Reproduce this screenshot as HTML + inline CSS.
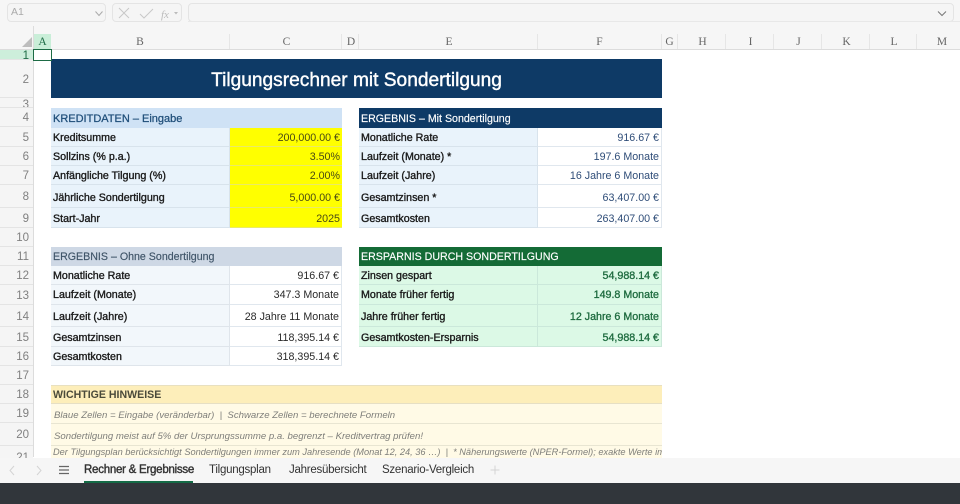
<!DOCTYPE html>
<html lang="de"><head><meta charset="utf-8"><title>Tilgungsrechner</title>
<style>
html,body{margin:0;padding:0;width:960px;height:504px;overflow:hidden;background:#fff;font-family:"Liberation Sans",Arial,sans-serif}
#w{position:relative;width:960px;height:504px;overflow:hidden;filter:blur(.35px)}
#w div{position:absolute;box-sizing:border-box;white-space:nowrap}
.box{background:#f5f5f5;border:1px solid #e4e4e4;border-radius:4px}
.ch{top:34px;height:15px;text-align:center;font:11.5px/16px "Liberation Serif",serif;color:#666;border-right:1px solid #e6e6e6}
.rh{left:0;width:33px;text-align:right;padding:1px 4px 0 0;font-size:11.5px;color:#808080;background:#f5f5f5;border-bottom:1px solid #e4e4e4}
.c{font-size:10.7px;padding:2px 0 0 2px;color:#1a1a1a;-webkit-text-stroke:.35px #1a1a1a;display:flex;align-items:center}
.l{background:#e9f3fb;border-bottom:1px solid #d8e3ec;border-right:1px solid #d8e3ec}
.v{font-size:10.7px;text-align:right;padding:2px 2px 0 0;display:flex;align-items:center;justify-content:flex-end;border-bottom:1px solid #e0e7ee;border-right:1px solid #e0e7ee;background:#fff;color:#2a2a2a}
.y{background:#ffff00;color:#4a4a14;border-bottom:1px solid #eaea66;border-right:0}
.b{color:#2f4d78}
.g{background:#dcf9e6;color:#1e6b3f;-webkit-text-stroke:.3px #1e6b3f;border-color:#cbe8da}
.gl{background:#dcf9e6;border-color:#cbe8da}
.p{background:#f2f7fb;border-bottom:1px solid #dfe5eb;border-right:1px solid #dfe5eb}
.h{font-size:10.65px;padding:2px 0 0 2px;display:flex;align-items:center;-webkit-text-stroke:.15px}
.n{left:51px;width:611px;font-size:9.6px;font-style:italic;color:#7e7e7a;padding:4px 0 0 3px;background:#fffae6;border-bottom:1px solid #e8e5d2;display:flex;align-items:center;overflow:hidden}
.t{top:458px;height:25px;line-height:25px;font-size:11.5px;letter-spacing:-.25px;color:#333}
.d1{padding-top:3.5px}
</style></head><body><div id="w">

<!-- top bar -->
<div style="left:0;top:0;width:960px;height:49px;background:#f6f6f6"></div>
<div class="box" style="left:7px;top:3px;width:99px;height:19px;font-size:10.5px;line-height:17px;color:#aaa;padding-left:3px">A1</div>
<svg style="position:absolute;left:94px;top:10px" width="10" height="7"><path d="M1.5 1.5L5 5.5L8.5 1.5" fill="none" stroke="#aaa" stroke-width="1"/></svg>
<div class="box" style="left:112px;top:3px;width:70px;height:19px"></div>
<svg style="position:absolute;left:116px;top:5px" width="64" height="16"><path d="M3 3L13 13M13 3L3 13" stroke="#c8c8c8" stroke-width="1" fill="none"/><path d="M24 9L28 13L37 4" stroke="#c8c8c8" stroke-width="1" fill="none"/><text x="45" y="13" font-family="Liberation Serif" font-style="italic" font-size="11" fill="#bbb">fx</text><path d="M58 7L60 9.5L62 7z" fill="#bbb"/></svg>
<div class="box" style="left:188px;top:3px;width:766px;height:19px"></div>
<svg style="position:absolute;left:937px;top:10px" width="10" height="7"><path d="M1 1.5L5 5.5L9 1.5" fill="none" stroke="#777" stroke-width="1"/></svg>
<div style="left:188px;top:21px;width:772px;height:1px;background:#e8e8e8"></div>

<!-- column headers -->
<div style="left:33px;top:26px;width:1px;height:431px;background:#dcdcdc"></div>
<svg style="position:absolute;left:22px;top:37px" width="10" height="10"><path d="M10 0V10H0z" fill="#bdbdbd"/></svg>
<div class="ch" style="left:34px;width:17px;background:#c9eed8;color:#1d6b45;border-right:0">A</div>
<div class="ch" style="left:51px;width:179px">B</div>
<div class="ch" style="left:230px;width:112px;padding-left:2px">C</div>
<div class="ch" style="left:342px;width:17px;padding-left:2px">D</div>
<div class="ch" style="left:359px;width:179px;padding-left:2px">E</div>
<div class="ch" style="left:538px;width:124px">F</div>
<div class="ch" style="left:662px;width:16px">G</div>
<div class="ch" style="left:678px;width:48px;padding-left:2px">H</div>
<div class="ch" style="left:726px;width:48px;padding-left:2px">I</div>
<div class="ch" style="left:774px;width:48px;padding-left:2px">J</div>
<div class="ch" style="left:822px;width:48px;padding-left:2px">K</div>
<div class="ch" style="left:870px;width:47px;padding-left:2px">L</div>
<div class="ch" style="left:917px;width:43px;border-right:0;padding-left:7px">M</div>
<div style="left:0;top:49px;width:960px;height:1px;background:#dcdcdc"></div>

<!-- row headers -->
<div class="rh" style="top:50px;height:10px;line-height:10px;background:#cdeedb;color:#1d6b45">1</div>
<div class="rh" style="top:60px;height:38px;line-height:38px">2</div>
<div class="rh" style="top:98px;height:10px;line-height:13px;overflow:hidden">3</div>
<div class="rh" style="top:108px;height:19px;line-height:19px">4</div>
<div class="rh" style="top:127px;height:20px;line-height:20px">5</div>
<div class="rh" style="top:147px;height:19px;line-height:19px">6</div>
<div class="rh" style="top:166px;height:19px;line-height:19px">7</div>
<div class="rh" style="top:185px;height:23px;line-height:23px">8</div>
<div class="rh" style="top:208px;height:20px;line-height:20px">9</div>
<div class="rh" style="top:228px;height:19px;line-height:19px">10</div>
<div class="rh" style="top:247px;height:19px;line-height:19px">11</div>
<div class="rh" style="top:266px;height:19px;line-height:19px">12</div>
<div class="rh" style="top:285px;height:20px;line-height:20px">13</div>
<div class="rh" style="top:305px;height:22px;line-height:22px">14</div>
<div class="rh" style="top:327px;height:20px;line-height:20px">15</div>
<div class="rh" style="top:347px;height:19px;line-height:19px">16</div>
<div class="rh" style="top:366px;height:19px;line-height:19px">17</div>
<div class="rh" style="top:385px;height:19px;line-height:19px">18</div>
<div class="rh" style="top:404px;height:19px;line-height:19px">19</div>
<div class="rh" style="top:423px;height:23px;line-height:23px">20</div>
<div class="rh" style="top:446px;height:12px;line-height:22px;overflow:hidden;border:0">21</div>

<!-- selected cell -->
<div style="left:33px;top:49px;width:19px;height:12px;border:1px solid #1d6b45;z-index:3"></div>

<!-- title -->
<div style="left:51px;top:59px;width:611px;height:39px;background:#0e3a66;color:#fff;font-size:19.15px;-webkit-text-stroke:.4px #fff;line-height:43px;text-align:center">Tilgungsrechner mit Sondertilgung</div>

<!-- KREDITDATEN -->
<div class="h" style="left:51px;top:108px;width:291px;height:19.5px;background:#cfe2f5;color:#1f4e79;font-size:11px;-webkit-text-stroke:.25px #1f4e79">KREDITDATEN – Eingabe</div>
<div class="c l" style="left:51px;top:127.5px;width:179px;height:19px">Kreditsumme</div><div class="v y" style="left:230px;top:127.5px;width:112px;height:19px">200,000.00 €</div>
<div class="c l" style="left:51px;top:146.5px;width:179px;height:19.5px">Sollzins (% p.a.)</div><div class="v y" style="left:230px;top:146.5px;width:112px;height:19.5px">3.50%</div>
<div class="c l" style="left:51px;top:166px;width:179px;height:19px">Anfängliche Tilgung (%)</div><div class="v y" style="left:230px;top:166px;width:112px;height:19px">2.00%</div>
<div class="c l d1" style="left:51px;top:185px;width:179px;height:23px">Jährliche Sondertilgung</div><div class="v y d1" style="left:230px;top:185px;width:112px;height:23px">5,000.00 €</div>
<div class="c l" style="left:51px;top:208px;width:179px;height:20px">Start-Jahr</div><div class="v y" style="left:230px;top:208px;width:112px;height:20px">2025</div>

<!-- ERGEBNIS mit -->
<div class="h" style="left:359px;top:108px;width:303px;height:19.5px;background:#0e3a66;color:#fff">ERGEBNIS – Mit Sondertilgung</div>
<div class="c l" style="left:359px;top:127.5px;width:179px;height:19px">Monatliche Rate</div><div class="v b" style="left:538px;top:127.5px;width:124px;height:19px">916.67 €</div>
<div class="c l" style="left:359px;top:146.5px;width:179px;height:19.5px">Laufzeit (Monate) *</div><div class="v b" style="left:538px;top:146.5px;width:124px;height:19.5px">197.6 Monate</div>
<div class="c l" style="left:359px;top:166px;width:179px;height:19px">Laufzeit (Jahre)</div><div class="v b" style="left:538px;top:166px;width:124px;height:19px">16 Jahre 6 Monate</div>
<div class="c l d1" style="left:359px;top:185px;width:179px;height:23px">Gesamtzinsen *</div><div class="v b d1" style="left:538px;top:185px;width:124px;height:23px">63,407.00 €</div>
<div class="c l" style="left:359px;top:208px;width:179px;height:20px">Gesamtkosten</div><div class="v b" style="left:538px;top:208px;width:124px;height:20px">263,407.00 €</div>

<!-- ERGEBNIS ohne -->
<div class="h" style="left:51px;top:247px;width:291px;height:19px;padding-top:1px;background:#ced8e5;color:#3f5468">ERGEBNIS – Ohne Sondertilgung</div>
<div class="c p" style="left:51px;top:266px;width:179px;height:19px">Monatliche Rate</div><div class="v" style="left:230px;top:266px;width:112px;height:19px">916.67 €</div>
<div class="c p" style="left:51px;top:285px;width:179px;height:19.5px">Laufzeit (Monate)</div><div class="v" style="left:230px;top:285px;width:112px;height:19.5px">347.3 Monate</div>
<div class="c p d1" style="left:51px;top:304.5px;width:179px;height:22.5px">Laufzeit (Jahre)</div><div class="v d1" style="left:230px;top:304.5px;width:112px;height:22.5px">28 Jahre 11 Monate</div>
<div class="c p d1" style="left:51px;top:327px;width:179px;height:19.5px">Gesamtzinsen</div><div class="v d1" style="left:230px;top:327px;width:112px;height:19.5px">118,395.14 €</div>
<div class="c p" style="left:51px;top:346.5px;width:179px;height:19.5px">Gesamtkosten</div><div class="v" style="left:230px;top:346.5px;width:112px;height:19.5px">318,395.14 €</div>

<!-- ERSPARNIS -->
<div class="h" style="left:359px;top:247px;width:303px;height:19px;padding-top:1px;background:#146b36;color:#fff">ERSPARNIS DURCH SONDERTILGUNG</div>
<div class="c l gl" style="left:359px;top:266px;width:179px;height:19px">Zinsen gespart</div><div class="v g" style="left:538px;top:266px;width:124px;height:19px">54,988.14 €</div>
<div class="c l gl" style="left:359px;top:285px;width:179px;height:19.5px">Monate früher fertig</div><div class="v g" style="left:538px;top:285px;width:124px;height:19.5px">149.8 Monate</div>
<div class="c l gl d1" style="left:359px;top:304.5px;width:179px;height:22.5px">Jahre früher fertig</div><div class="v g d1" style="left:538px;top:304.5px;width:124px;height:22.5px">12 Jahre 6 Monate</div>
<div class="c l gl" style="left:359px;top:327px;width:179px;height:20px">Gesamtkosten-Ersparnis</div><div class="v g" style="left:538px;top:327px;width:124px;height:20px">54,988.14 €</div>

<!-- Hinweise -->
<div class="h" style="left:51px;top:385px;width:611px;height:19px;padding-top:1px;background:#fdeeba;color:#4a4a3a;font-weight:bold;font-size:10.6px;-webkit-text-stroke:0;border-top:1px solid #e8e0c0;border-bottom:1px solid #e6dfc4">WICHTIGE HINWEISE</div>
<div class="n" style="top:404px;height:19.5px">Blaue Zellen = Eingabe (veränderbar) &nbsp;|&nbsp; Schwarze Zellen = berechnete Formeln</div>
<div class="n" style="top:423.5px;height:22.5px">Sondertilgung meist auf 5% der Ursprungssumme p.a. begrenzt – Kreditvertrag prüfen!</div>
<div class="n" style="top:446px;height:12px;border:0;font-size:9.24px;align-items:flex-start;line-height:10px;padding:1px 0 0 2px">Der Tilgungsplan berücksichtigt Sondertilgungen immer zum Jahresende (Monat 12, 24, 36 …) &nbsp;|&nbsp; * Näherungswerte (NPER-Formel); exakte Werte im</div>

<!-- tab bar -->
<div style="left:0;top:457.5px;width:960px;height:26px;background:#f6f6f6"></div>
<svg style="position:absolute;left:8px;top:464px" width="40" height="13"><path d="M6 2L2 6.5L6 11M29 2L33 6.5L29 11" fill="none" stroke="#d4d4d4" stroke-width="1"/></svg>
<svg style="position:absolute;left:58px;top:465px" width="12" height="10"><path d="M1 1.5H11M1 5H11M1 8.5H11" stroke="#666" stroke-width="1.2"/></svg>
<div class="t" style="left:84px;-webkit-text-stroke:.4px #333">Rechner &amp; Ergebnisse</div>
<div style="left:84px;top:481px;width:109px;height:2px;background:#146b46"></div>
<div class="t" style="left:209px">Tilgungsplan</div>
<div class="t" style="left:289px">Jahresübersicht</div>
<div class="t" style="left:382px">Szenario-Vergleich</div>
<svg style="position:absolute;left:489px;top:464px" width="12" height="12"><path d="M6 1.5V10.5M1.5 6H10.5" stroke="#d4d4d4" stroke-width="1"/></svg>

<!-- bottom dark -->
<div style="left:0;top:483px;width:960px;height:21px;background:#31363b"></div>
</div></body></html>
